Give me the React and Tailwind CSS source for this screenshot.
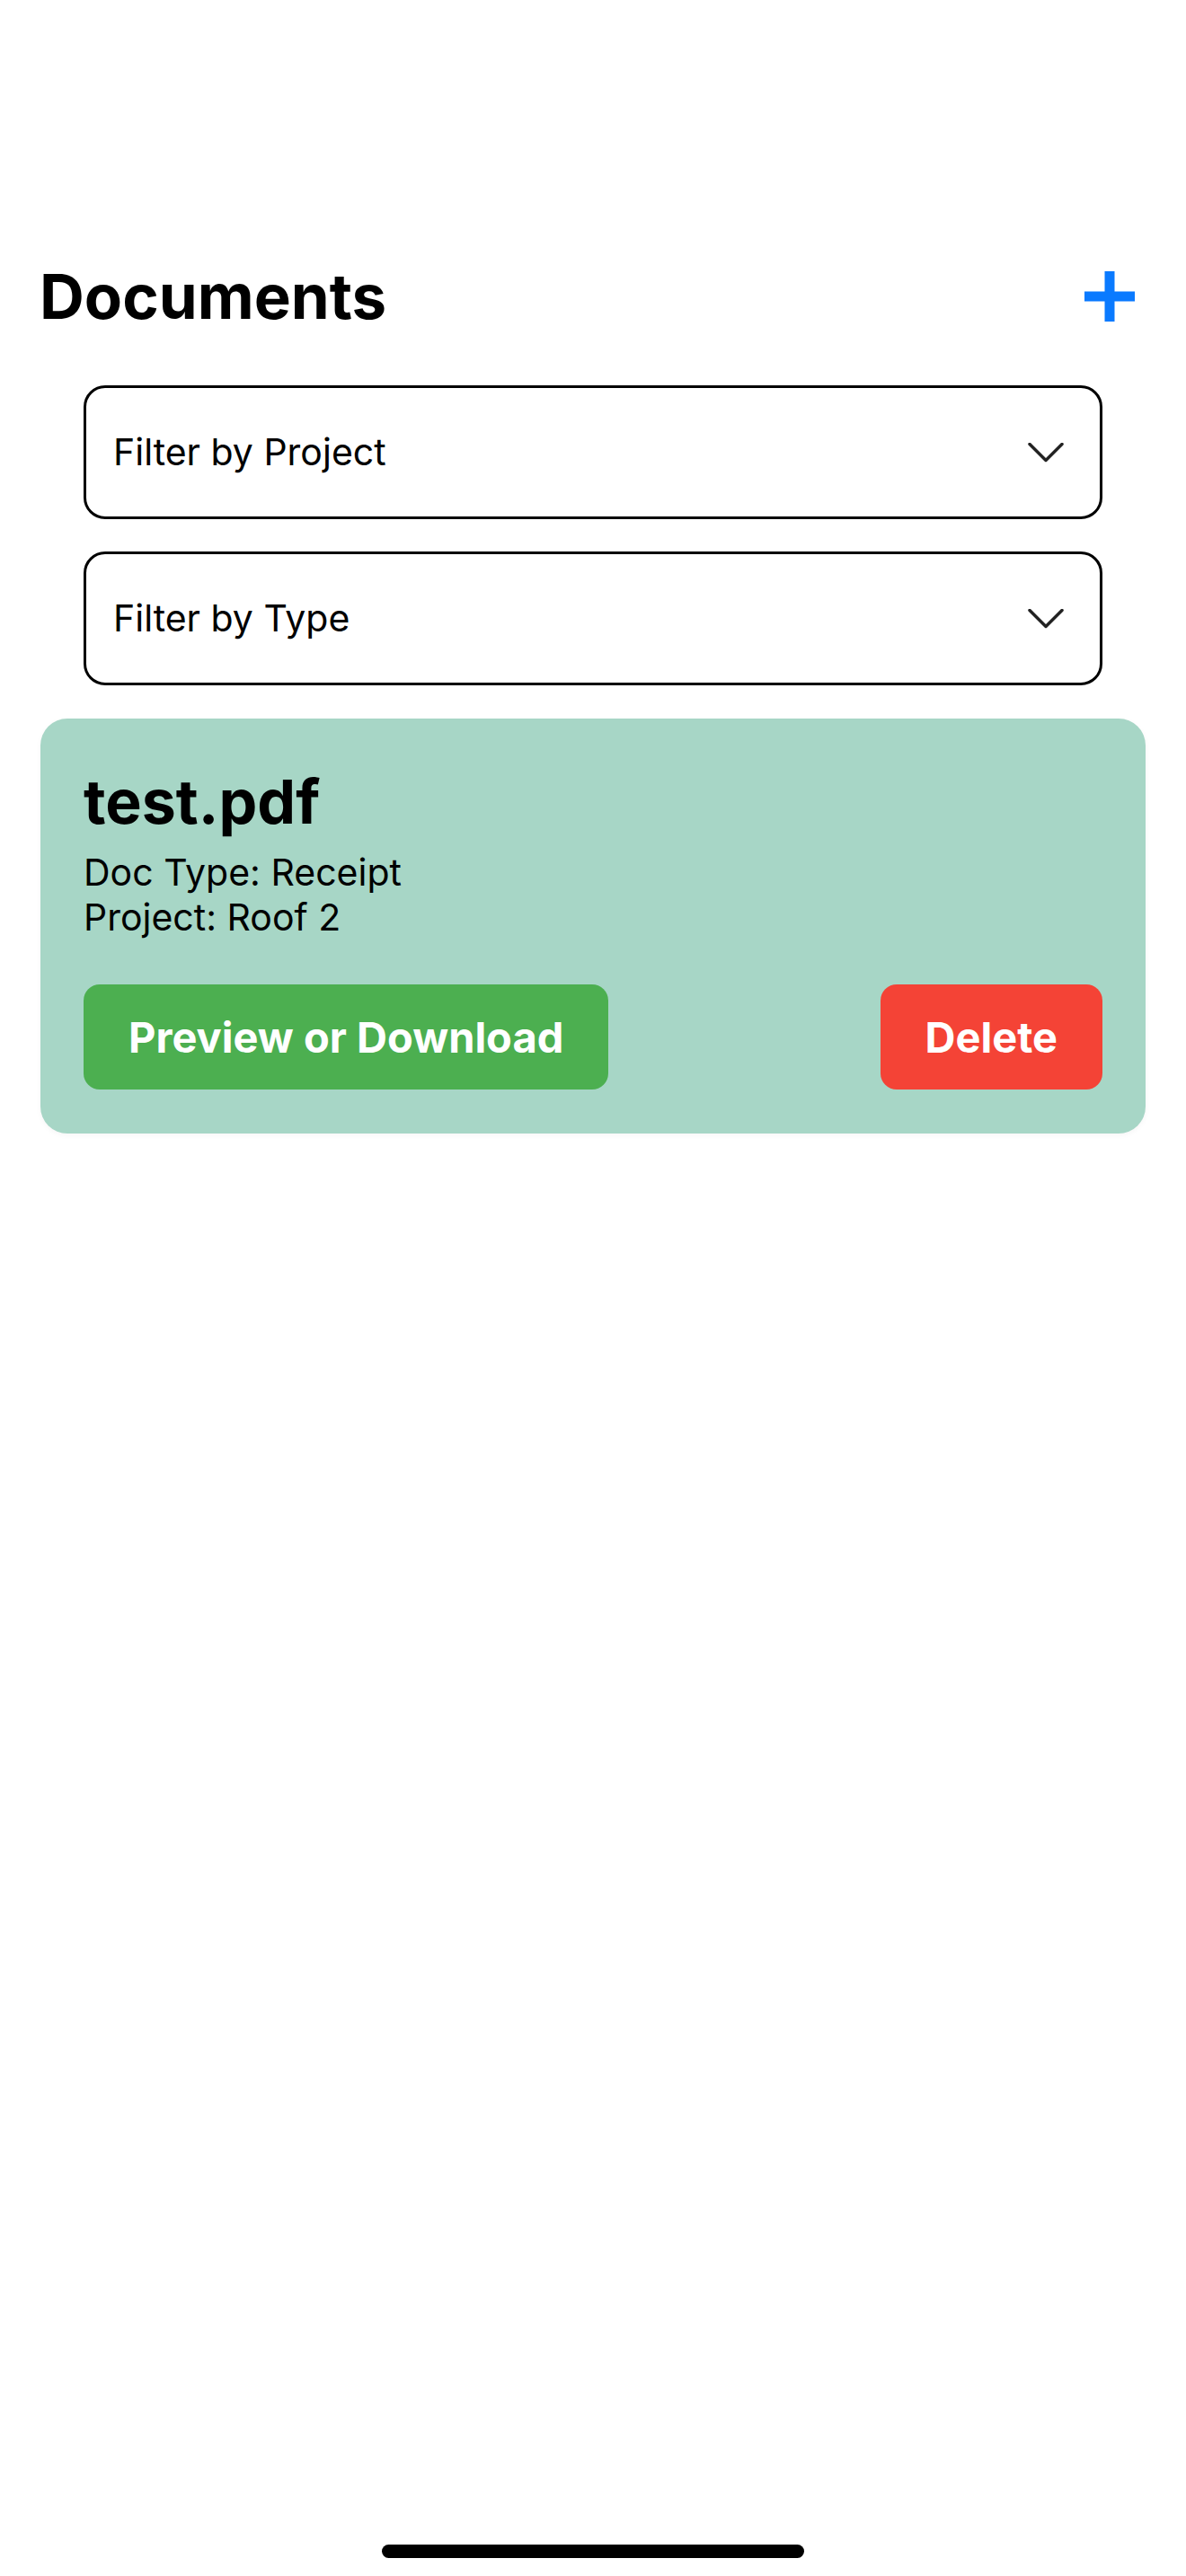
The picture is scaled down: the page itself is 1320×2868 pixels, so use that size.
import React from "react";

const filters = ["Filter by Project", "Filter by Type"];

const Chevron = () => (
  <svg width="40" height="22" viewBox="0 0 40 22" fill="none">
    <path d="M2 1.5 L20 19.5 L38 1.5" stroke="#222" strokeWidth="3.5" strokeLinecap="round" strokeLinejoin="round" />
  </svg>
);

const PlusIcon = () => (
  <svg width="56" height="56" viewBox="0 0 56 56">
    <rect x="22.5" y="0" width="11" height="56" fill="#0A7AFF" />
    <rect x="0" y="22.5" width="56" height="11" fill="#0A7AFF" />
  </svg>
);

const FilterSelect = ({ label }) => (
  <button className="flex items-center justify-between h-[149px] w-full border-[3px] border-black rounded-[24px] pl-[30px] pr-[40px] bg-white">
    <span className="text-[41px] leading-none text-black">{label}</span>
    <Chevron />
  </button>
);

const DocumentCard = ({ name, type, project }) => (
  <div className="mx-[45px] mt-[37px] bg-[#a7d6c6] rounded-[30px] px-[48px] pt-[58px] pb-[49px] shadow-[0_2px_6px_rgba(0,0,0,0.04)]">
    <h2 className="text-[68px] font-bold leading-none text-black">{name}</h2>
    <div className="mt-[20px] text-[41px] leading-[50px] text-black">
      <p>Doc Type: {type}</p>
      <p>Project: {project}</p>
    </div>
    <div className="mt-[50px] flex items-center justify-between">
      <button className="h-[117px] px-[50px] rounded-[18px] bg-[#4caf50] text-white text-[47px] font-bold leading-none">
        Preview or Download
      </button>
      <button className="h-[117px] px-[50px] rounded-[18px] bg-[#f44336] text-white text-[47px] font-bold leading-none">
        Delete
      </button>
    </div>
  </div>
);

const App = () => {
  return (
    <div className="relative w-[1320px] h-[2868px] bg-white [font-family:Inter,sans-serif] overflow-hidden">
      <div className="flex flex-col pt-[295px]">
        {/* Header */}
        <div className="flex items-center justify-between h-[70px] pl-[44px] pr-[57px]">
          <h1 className="text-[69px] font-bold leading-none text-black">Documents</h1>
          <button>
            <PlusIcon />
          </button>
        </div>

        {/* Filters */}
        <div className="flex flex-col gap-[36px] px-[93px] mt-[64px]">
          {filters.map((f) => (
            <FilterSelect key={f} label={f} />
          ))}
        </div>

        <DocumentCard name="test.pdf" type="Receipt" project="Roof 2" />
      </div>

      {/* Home indicator */}
      <div className="absolute bottom-[20px] left-1/2 -translate-x-1/2 w-[470px] h-[15px] rounded-full bg-black" />
    </div>
  );
};

export default App;
